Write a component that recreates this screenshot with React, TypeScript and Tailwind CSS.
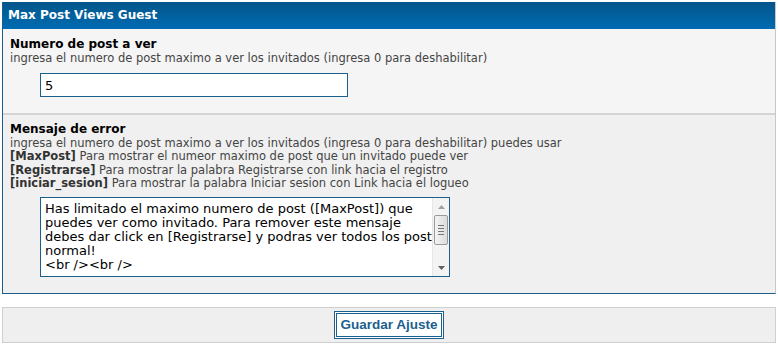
export default function App() {
  const verdana = "font-['DejaVu_Sans',Verdana,sans-serif]";
  return (
    <div className={`${verdana} bg-white w-[778px] h-[349px] pt-[2px] px-[2px]`}>
      <div className="border-l border-b border-l-[#1b5f8f] border-b-[#1b5f8f] border-r border-r-[#c8c8c8]">
        <div className="h-[27px] bg-gradient-to-b from-[#03558a] to-[#006cb2] text-white font-bold text-[12px] leading-[27px] pl-[5px]">
          Max Post Views Guest
        </div>

        <div className="bg-[#f5f5f5] pl-[7px] pt-[7px] pb-[16px] border-b-2 border-[#d4d4d4]">
          <div className="font-bold text-[12px] leading-[16px] text-black">Numero de post a ver</div>
          <div className="text-[11.5px] leading-[13px] text-[#444]">
            ingresa el numero de post maximo a ver los invitados (ingresa 0 para deshabilitar)
          </div>
          <input
            defaultValue="5"
            className="mt-[8px] ml-[30px] w-[308px] h-[24px] bg-white border border-[#1b5f8f] px-[4px] text-[13px] text-black outline-none"
          />
        </div>

        <div className="bg-[#f0f0f0] pl-[7px] pt-[7px] pb-[16px]">
          <div className="font-bold text-[12px] leading-[15px] text-black">Mensaje de error</div>
          <div className="text-[11.5px] leading-[13.3px] text-[#444]">
            <div>ingresa el numero de post maximo a ver los invitados (ingresa 0 para deshabilitar) puedes usar</div>
            <div>
              <b className="text-[#333]">[MaxPost]</b> Para mostrar el numeor maximo de post que un invitado puede ver
            </div>
            <div>
              <b className="text-[#333]">[Registrarse]</b> Para mostrar la palabra Registrarse con link hacia el registro
            </div>
            <div>
              <b className="text-[#333]">[iniciar_sesion]</b> Para mostrar la palabra Iniciar sesion con Link hacia el logueo
            </div>
          </div>
          <div className="mt-[7px] ml-[30px] w-[410px] h-[80px] bg-white border border-[#1b5f8f] flex">
            <textarea
              className="flex-1 h-full bg-white pl-[4px] pt-[4px] text-[13px] leading-[14px] text-black resize-none outline-none overflow-hidden"
              defaultValue={
                "Has limitado el maximo numero de post ([MaxPost]) que puedes ver como invitado. Para remover este mensaje debes dar click en [Registrarse] y podras ver todos los post normal!\n<br /><br />"
              }
            />
            <div className="w-[17px] h-full bg-[#f3f3f3] flex flex-col items-center border-l border-[#e6e6e6]">
              <div className="h-[17px] flex items-center justify-center">
                <svg width="7" height="4" viewBox="0 0 7 4">
                  <path d="M0 4 L3.5 0 L7 4 Z" fill="#a0a0a0" />
                </svg>
              </div>
              <div className="w-[14px] h-[30px] rounded-[2px] border border-[#9a9a9a] bg-gradient-to-r from-[#f4f4f4] to-[#dcdcdc] flex flex-col items-center justify-center gap-[2px]">
                <div className="w-[6px] h-px bg-[#777]" />
                <div className="w-[6px] h-px bg-[#777]" />
                <div className="w-[6px] h-px bg-[#777]" />
                <div className="w-[6px] h-px bg-[#777]" />
              </div>
              <div className="flex-1" />
              <div className="h-[17px] flex items-center justify-center">
                <svg width="7" height="4" viewBox="0 0 7 4">
                  <path d="M0 0 L3.5 4 L7 0 Z" fill="#606060" />
                </svg>
              </div>
            </div>
          </div>
        </div>
      </div>

      <div className="mt-[13px] h-[36px] bg-[#efefef] border border-[#cfcfcf] flex items-center justify-center">
        <button className="h-[28px] px-[3px] border-[3px] border-double border-[#1b5f8f] bg-white text-[#1b5f8f] font-bold text-[13.5px] font-['Liberation_Sans',Arial,sans-serif]">
          Guardar Ajuste
        </button>
      </div>
    </div>
  );
}
